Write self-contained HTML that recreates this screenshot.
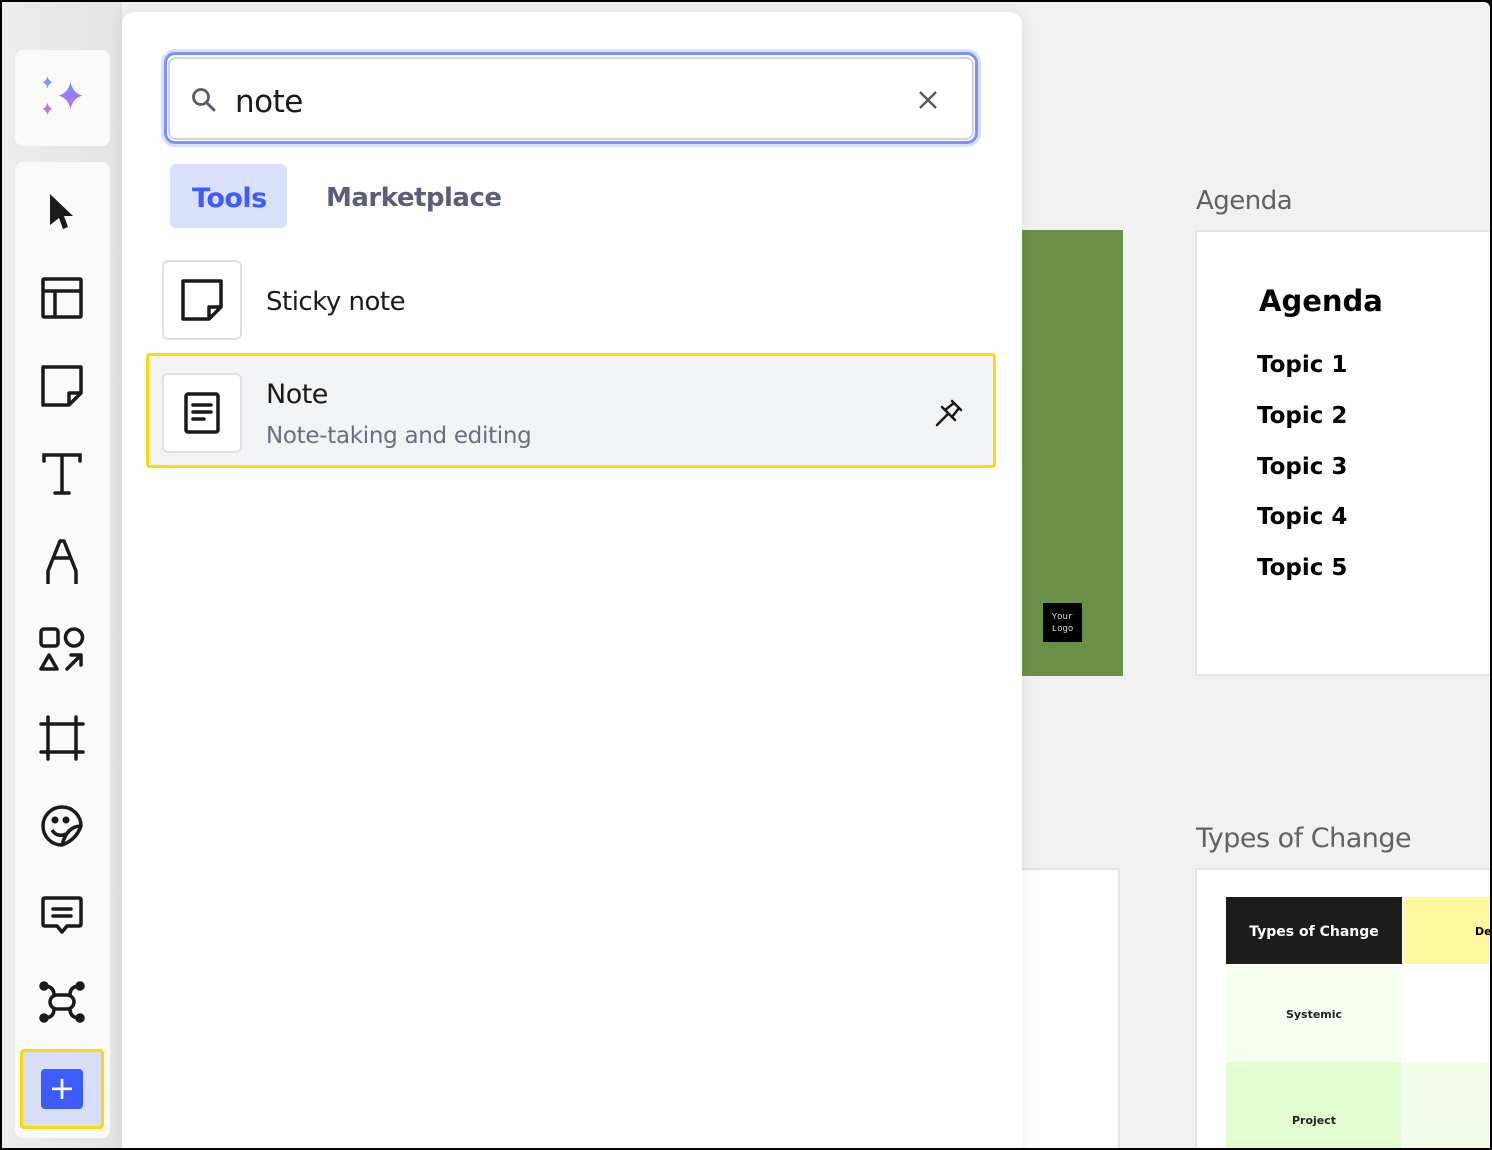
<!DOCTYPE html>
<html><head><meta charset="utf-8"><style>
*{box-sizing:border-box;margin:0;padding:0}
body{width:1492px;height:1150px;overflow:hidden;background:#000;font-family:"Liberation Sans","DejaVu Sans",sans-serif;position:relative}
#frame{position:absolute;left:2px;top:2px;width:1488px;height:1146px;background:#f1f1f1;overflow:hidden;border-radius:0 6px 0 0}
.abs{position:absolute}
.tb{position:absolute;left:13px;width:95px;background:#fafafb;border-radius:8px}
.ic{position:absolute;left:47px;transform:translate(-50%,-50%)}
svg{display:block}
.card{position:absolute;background:#fff;border:2px solid #e3e3e3}
.topic{position:absolute;left:1255px;font:bold 23px "DejaVu Sans",sans-serif;color:#000}
</style></head><body>
<div id="frame">
<div class="abs" style="left:0;top:0;width:120px;height:1146px;background:linear-gradient(90deg,#ececec,#e4e4e6)"></div>
<div class="abs" style="left:1020px;top:228px;width:101px;height:446px;background:#6b9146"></div>
<div class="abs" style="left:1041px;top:601px;width:39px;height:39px;background:#000;color:#ddd;font:9px 'Liberation Mono',monospace;text-align:center;line-height:12px;padding-top:8px">Your<br>Logo</div>
<div class="abs" style="left:1194px;top:184px;font:26px 'DejaVu Sans',sans-serif;color:#606266;letter-spacing:-0.5px">Agenda</div>
<div class="card" style="left:1193px;top:228px;width:300px;height:446px"></div>
<div class="abs" style="left:1257px;top:282px;font:bold 29px 'DejaVu Sans',sans-serif;color:#000">Agenda</div>
<div class="topic" style="top:350px">Topic 1</div>
<div class="topic" style="top:401px">Topic 2</div>
<div class="topic" style="top:452px">Topic 3</div>
<div class="topic" style="top:502px">Topic 4</div>
<div class="topic" style="top:553px">Topic 5</div>
<div class="abs" style="left:1194px;top:821px;font:27px 'DejaVu Sans',sans-serif;color:#606266;letter-spacing:-0.5px">Types of Change</div>
<div class="card" style="left:1000px;top:866px;width:118px;height:300px"></div>
<div class="card" style="left:1193px;top:866px;width:300px;height:300px"></div>
<div class="abs" style="left:1224px;top:895px;width:176px;height:67px;background:#1c1c1c;color:#fff;font:bold 14px 'DejaVu Sans',sans-serif;text-align:center;line-height:70px">Types of Change</div>
<div class="abs" style="left:1401px;top:895px;width:100px;height:67px;background:#fff89f;font:bold 11px 'DejaVu Sans',sans-serif;line-height:70px;padding-left:72px">De</div>
<div class="abs" style="left:1224px;top:963px;width:176px;height:96px;background:#f6fdf1;font:bold 11px 'DejaVu Sans',sans-serif;text-align:center;line-height:100px;color:#222">Systemic</div>
<div class="abs" style="left:1224px;top:1060px;width:176px;height:100px;background:#e1fdcf;font:bold 11px 'DejaVu Sans',sans-serif;text-align:center;padding-top:52px;color:#222">Project</div>
<div class="abs" style="left:1401px;top:1060px;width:100px;height:100px;background:#f1fde8"></div>

<div class="tb" style="top:48px;height:96px">
<svg class="ic" style="top:48px" width="46" height="46" viewBox="4 4 38 38"><defs><linearGradient id="g" x1="0" y1="0" x2="0" y2="1"><stop offset="0" stop-color="#6f8cff"/><stop offset="1" stop-color="#c070f0"/></linearGradient></defs>
<path d="M30 10 Q32 19 40 21 Q32 23 30 32 Q28 23 20 21 Q28 19 30 10Z" fill="url(#g)"/>
<path d="M11 5 Q12 9 15 10 Q12 11 11 15 Q10 11 7 10 Q10 9 11 5Z" fill="#6f9cff"/>
<path d="M11 27 Q12 31 15 32 Q12 33 11 37 Q10 33 7 32 Q10 31 11 27Z" fill="#c070f0"/></svg>
</div>
<div class="tb" style="top:160px;height:976px">
<svg class="ic" style="top:50px" width="30" height="40" viewBox="0 0 30 40"><path d="M3 2 L26 24 L17 24 L21 35 L16 37 L12 26 L3 33Z" fill="#1a1a1a"/></svg>
<svg class="ic" style="top:136px" width="42" height="42" viewBox="0 0 42 42" fill="none" stroke="#1a1a1a" stroke-width="3.5"><rect x="2" y="2" width="38" height="38" rx="1"/><path d="M2 14H40M14 14V40"/></svg>
<svg class="ic" style="top:224px" width="42" height="42" viewBox="0 0 42 42" fill="none" stroke="#1a1a1a" stroke-width="3.5" stroke-linejoin="round"><path d="M2 2H40V28L28 40H2Z M40 28H28V40" /></svg>
<svg class="ic" style="top:312px" width="42" height="44" viewBox="0 0 42 44" fill="none" stroke="#1a1a1a" stroke-width="3.5" stroke-linecap="round"><path d="M3 9V3H39V9M21 3V41M14 41H28"/></svg>
<svg class="ic" style="top:400px" width="36" height="48" viewBox="0 0 36 48" fill="none" stroke="#1a1a1a" stroke-width="3.5" stroke-linejoin="round"><path d="M4 46V33L16 3H20L32 33V46M9 20H27"/></svg>
<svg class="ic" style="top:488px" width="46" height="46" viewBox="0 0 46 46" fill="none" stroke="#1a1a1a" stroke-width="3.5" stroke-linejoin="round" stroke-linecap="round"><rect x="2" y="2" width="17" height="17" rx="3"/><circle cx="35" cy="10.5" r="8.5"/><path d="M10 28L18 42H2Z M28 42L42 28M32 28H42V38"/></svg>
<svg class="ic" style="top:576px" width="46" height="46" viewBox="0 0 46 46" fill="none" stroke="#1a1a1a" stroke-width="3.5" stroke-linecap="round"><path d="M2 9H44M2 37H44M9 2V44M37 2V44"/></svg>
<svg class="ic" style="top:664px" width="44" height="44" viewBox="0 0 44 44" fill="none" stroke="#1a1a1a" stroke-width="3.5" stroke-linejoin="round"><path d="M41 22A19 19 0 1 0 22 41Q36 36 41 22Z M41 22Q27 22 22 41"/><path d="M12 26Q17 34 26 30" /><circle cx="15" cy="16" r="1.8" fill="#1a1a1a"/><circle cx="26" cy="16" r="1.8" fill="#1a1a1a"/></svg>
<svg class="ic" style="top:754px" width="42" height="40" viewBox="0 0 42 40" fill="none" stroke="#1a1a1a" stroke-width="3.5" stroke-linejoin="round" stroke-linecap="round"><path d="M4 2H38Q40 2 40 4V28Q40 30 38 30H26L21 36L16 30H4Q2 30 2 28V4Q2 2 4 2Z M12 13H30M12 20H30"/></svg>
<svg class="ic" style="top:840px" width="46" height="42" viewBox="0 0 46 42" fill="none" stroke="#1a1a1a" stroke-width="3.5" stroke-linecap="round"><circle cx="5" cy="5" r="3" fill="#1a1a1a"/><circle cx="41" cy="5" r="3" fill="#1a1a1a"/><circle cx="5" cy="37" r="3" fill="#1a1a1a"/><circle cx="41" cy="37" r="3" fill="#1a1a1a"/><path d="M5 5Q15 5 15 14M41 5Q31 5 31 14M5 37Q15 37 15 28M41 37Q31 37 31 28"/><rect x="11" y="14" width="24" height="14" rx="7"/></svg>
<div class="abs" style="left:5px;top:887px;width:84px;height:80px;border:3px solid #ffd900;border-radius:4px;background:#d9def8"></div>
<div class="abs" style="left:26px;top:907px;width:42px;height:40px;background:#3d5bff;border-radius:4px;color:#fff;font:32px 'DejaVu Sans',sans-serif;text-align:center;line-height:38px">+</div>
</div>

<div class="abs" style="left:120px;top:10px;width:900px;height:1160px;background:#fff;border-radius:12px;box-shadow:0 0 16px rgba(0,0,0,.08)"></div>
<div class="abs" style="left:159px;top:47px;width:820px;height:98px;border:4px solid #d9defc;border-radius:14px"></div>
<div class="abs" style="left:162px;top:50px;width:814px;height:92px;border:3px solid #7a92ff;border-radius:11px"></div>
<div class="abs" style="left:166px;top:55px;width:806px;height:83px;border:2px solid #d3d3da;border-radius:8px;background:#fff"></div>
<svg class="abs" style="left:189px;top:85px" width="26" height="26" viewBox="0 0 26 26" fill="none" stroke="#555a6a" stroke-width="2.8" stroke-linecap="round"><circle cx="10" cy="10" r="7.5"/><path d="M16 16L23 23"/></svg>
<div class="abs" style="left:233px;top:82px;font:31px 'DejaVu Sans',sans-serif;color:#1a1a1a;letter-spacing:-0.5px">note</div>
<svg class="abs" style="left:916px;top:88px" width="20" height="20" viewBox="0 0 20 20" stroke="#555a6a" stroke-width="2.5"><path d="M2 2L18 18M18 2L2 18"/></svg>
<div class="abs" style="left:168px;top:162px;width:117px;height:64px;background:#dbe0fb;border-radius:6px"></div>
<div class="abs" style="left:190px;top:181px;font:bold 27px 'DejaVu Sans',sans-serif;color:#3d5bff;letter-spacing:-0.5px">Tools</div>
<div class="abs" style="left:324px;top:181px;font:bold 26px 'DejaVu Sans',sans-serif;color:#5a5f78;letter-spacing:-0.5px">Marketplace</div>
<div class="abs" style="left:160px;top:258px;width:80px;height:80px;border:2px solid #e0e0e4;border-radius:6px"></div>
<svg class="abs" style="left:179px;top:277px" width="42" height="42" viewBox="0 0 42 42" fill="none" stroke="#1a1a1a" stroke-width="3.5" stroke-linejoin="round"><path d="M2 2H40V28L28 40H2Z M40 28H28V40"/></svg>
<div class="abs" style="left:264px;top:285px;font:26px 'DejaVu Sans',sans-serif;color:#1a1a1a;letter-spacing:-0.5px">Sticky note</div>
<div class="abs" style="left:144px;top:351px;width:850px;height:115px;border:3px solid #ffd900;border-radius:4px;background:#f2f3f5"></div>
<div class="abs" style="left:160px;top:371px;width:80px;height:80px;border:2px solid #e0e0e4;border-radius:6px;background:#fff"></div>
<svg class="abs" style="left:182px;top:390px" width="36" height="42" viewBox="0 0 36 42" fill="none" stroke="#1a1a1a" stroke-width="3.5" stroke-linecap="round" stroke-linejoin="round"><rect x="2" y="2" width="32" height="38" rx="2"/><path d="M9 13H27M9 20H27M9 27H20"/></svg>
<div class="abs" style="left:264px;top:377px;font:27px 'DejaVu Sans',sans-serif;color:#1a1a1a;letter-spacing:-0.5px">Note</div>
<div class="abs" style="left:264px;top:421px;font:23px 'DejaVu Sans',sans-serif;color:#6a6e80;letter-spacing:-0.3px">Note-taking and editing</div>
<svg class="abs" style="left:932px;top:396px" width="30" height="30" viewBox="0 0 30 30" fill="none" stroke="#1a1a1a" stroke-width="2.5" stroke-linecap="round"><path d="M18 3L27 12M20 5L11 12M25 10L18 19M8 9L21 22M14 16L3 27"/></svg>
</div>
</body></html>
